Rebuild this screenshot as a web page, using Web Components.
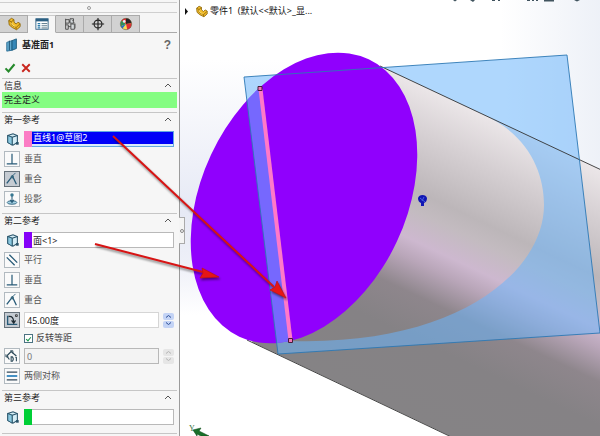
<!DOCTYPE html>
<html lang="zh-CN">
<head>
<meta charset="utf-8">
<title>基准面1</title>
<style>
html,body{margin:0;height:100%}
body{font:9px/12px "Noto Sans","Noto Sans CJK SC",sans-serif;color:#222;background:#fff}
</style>
</head>
<body>
<cad-app></cad-app>
<script>
const ICONS={
part:'<path d="M2 4l3-2.500 3 1.500v3l2.500 2 2-2 2.500 1.500v3.500L11 14.500 6 12 2.500 9z" fill="#f3bd2b" stroke="#8d6508"/><path d="M2 4l3 1.500L8 3M5 5.500v3.500l5.500 3 4-4M10.500 12v2" fill="none" stroke="#8d6508"/><path d="M5.500 6.500v2l4 2.500" fill="none" stroke="#ffe680"/>',
props:'<rect x="1" y="2" width="14" height="12" fill="#fff" stroke="#2b5f82"/><path d="M1 2h14v3H1z" fill="#2b5f82"/><path d="M3 7.500h3M3 10h3M3 12.500h3" stroke="#2b7dac" stroke-width="1.500"/><path d="M7.500 7.500H14M7.500 10H14M7.500 12.500H14" stroke="#45687c"/>',
config:'<path d="M3 2v12M3 3h4v4H3M3 9h3v5H3M7 5h3M6 11h3" fill="none" stroke="#444"/><path d="M8 2h4v5H8zM9 8h4v6H9z" fill="#d5dadd" stroke="#444"/><path d="M10 3l4 5v5" fill="none" stroke="#777"/>',
target:'<circle cx="8" cy="8" r="4.500" fill="none" stroke="#222" stroke-width="1.300"/><path d="M8 1v14M1 8h14" stroke="#222" stroke-width="1.300"/>',
ball:'<circle cx="8" cy="8" r="6.500" fill="#f6dc57"/><path d="M8 8L3 4A6.500 6.500 0 0 0 2 10.500z" fill="#2e8f5a"/><path d="M8 8L3 4a6.500 6.500 0 0 1 5-2.500z" fill="#e02e34"/><path d="M8 8V1.500A6.500 6.500 0 0 1 14.300 7z" fill="#2b2526"/><path d="M8 8l6.300-1a6.500 6.500 0 0 1-4.800 7.300z" fill="#e02e34"/><path d="M8 8L2 10.500l2 2.700z" fill="#2370c8"/><circle cx="6" cy="5" r="1.500" fill="#e4f3fa"/><circle cx="8" cy="8" r="6.500" fill="none" stroke="#534a43" stroke-width=".6"/>',
plane:'<path d="M2 5l6-2v11l-6 1z" fill="#62a9ce" stroke="#286c94"/><path d="M8 3l5-2v11l-5 2z" fill="#3688b8" stroke="#195878"/><path d="M5 3v11" stroke="#174d6c"/>',
ok:'<path d="M2 8.500l4 4L14 3" fill="none" stroke="#25892b" stroke-width="2.800"/>',
no:'<path d="M3 3l10 10M13 3L3 13" stroke="#c9261e" stroke-width="2.500"/>',
cube:'<path d="M2 4l6-2 5 2v8l-5 3-6-3z" fill="#d4edf6" stroke="#285268" stroke-width="1.200"/><path d="M2 4l5 2v9M7 6l6-2" fill="none" stroke="#285268" stroke-width="1.200"/><path d="M2 4l5 2v9l-5-3z" fill="#8bc8df" stroke="#285268"/><path d="M11.500 11.500h3v3h-3z" fill="#285268"/>',
perp:'<path d="M8 2v11M2 13.500h12" fill="none" stroke="#285b78" stroke-width="1.400"/>',
coin:'<path d="M2 13L8.500 4.500 13 14" fill="none" stroke="#285b78" stroke-width="1.500"/><path d="M8 5L12 1" stroke="#285b78"/><circle cx="8.300" cy="5.500" r="1.800" fill="#38687f"/>',
proj:'<ellipse cx="8" cy="12" rx="5.500" ry="2" fill="#a6d3e5" stroke="#285b78"/><path d="M8 4v8M6 9l2 3 2-3" fill="none" stroke="#285b78" stroke-width="1.200"/><circle cx="8" cy="3.500" r="2" fill="#377892"/>',
para:'<path d="M2 5l9 9M5 2l9 9" stroke="#285b78" stroke-width="1.500"/>',
angle:'<path d="M3 3v10h11" fill="none" stroke="#285b78" stroke-width="1.500"/><path d="M4 4q6-1 6 7M7.500 8.500l2.500 3 2-3" fill="none" stroke="#202b32" stroke-width="1.500"/><path d="M12 2h2v2h-2z" fill="none" stroke="#333"/>',
dist:'<path d="M2 8l5-5 6 5M2 8l3 4" fill="none" stroke="#2a4858" stroke-width="1.400"/><path d="M1 6v3h3M6 2h3v3" fill="none" stroke="#2a4858"/><path d="M7 9h1.500q2 2.500 0 5H7zM13 9v5M12 10l1-1" fill="none" stroke="#2a4858" stroke-width="1.200"/>',
sym:'<path d="M2 3.500h12M2 12.500h12" stroke="#34495a" stroke-width="1.500"/><path d="M2 8h12" stroke="#2b81bc" stroke-width="2"/>'
};
function def(name,html){
  const t=document.createElement('template');t.innerHTML=html;
  customElements.define(name,class extends HTMLElement{
    constructor(){super();this.attachShadow({mode:'open'}).append(t.content.cloneNode(true))}
  });
}
customElements.define('cad-icon',class extends HTMLElement{
  connectedCallback(){
    if(this.shadowRoot)return;
    this.attachShadow({mode:'open'}).innerHTML=`<style>:host{display:block;width:14px;height:14px;flex:none}svg{display:block;width:100%;height:100%}</style><svg viewBox="0 0 16 16" aria-hidden="true">${ICONS[this.getAttribute('name')]}</svg>`;
  }
});
def('pm-section',`<style>
:host{display:block;margin:0 2px;border-top:1px solid #c6c6c6;padding-bottom:6px}
:host([info]){padding-bottom:4px}
:host([last]){padding-bottom:8px;border-bottom:1px solid #c6c6c6}
header{height:13px;padding:0 5px 0 2px;display:flex;align-items:center;justify-content:space-between}
h2{margin:0;font:inherit}
button{border:0;background:none;padding:0;width:8px;height:10px;display:grid;place-items:center}
.body{display:grid;gap:4px;padding:5px 3px 0 2px}
:host([info]) .body{padding:0}
</style><header><h2><slot name="title"></slot></h2><button aria-label="折叠"><svg width="8" height="5"><path d="M1 4l3-3 3 3" fill="none" stroke="#555"/></svg></button></header><div class="body"><slot></slot></div>`);
customElements.define('pm-option',class extends HTMLElement{
  connectedCallback(){
    if(this.shadowRoot)return;
    const on=this.hasAttribute('on');
    this.attachShadow({mode:'open'}).innerHTML=`<style>
    :host{display:block}
    button{font:inherit;color:#555;border:0;background:none;padding:0;height:16px;display:flex;align-items:center;gap:4px}
    .box{box-sizing:border-box;width:16px;height:16px;border:1px solid ${on?'#66717a':'#b2bac0'};background:${on?'#c5cbd2':'#fafafa'};display:grid;place-items:center}
    </style><button aria-pressed="${on}"><span class="box"><cad-icon name="${this.getAttribute('icon')}"></cad-icon></span><span><slot></slot></span></button>`;
  }
});
customElements.define('pm-pick',class extends HTMLElement{
  connectedCallback(){
    if(this.shadowRoot)return;
    const a=this.hasAttribute('active');
    this.attachShadow({mode:'open'}).innerHTML=`<style>
    :host{display:flex;align-items:center;gap:4px;height:16px}
    cad-icon{margin-left:2px}
    .f{flex:1;min-width:0;box-sizing:border-box;height:16px;display:flex;border:1px solid ${a?'#62a8e0':'#b9b9b9'};border-left:0;background:${a?'#d9ebfa':'#fff'}}
    .s{width:8px;margin:-1px 0;background:${this.getAttribute('color')}}
    input{flex:1;min-width:0;height:${a?'12px':'14px'};box-sizing:border-box;border:0;padding:0 1px;font:inherit;outline:0;background:${a?'#0000f8':'#fff'};color:${a?'#fff':'#222'}}
    </style><cad-icon name="cube"></cad-icon><div class="f"><span class="s"></span><input readonly aria-label="${this.getAttribute('label')}" value="${this.getAttribute('value')||''}"></div>`;
  }
});
customElements.define('pm-number',class extends HTMLElement{
  connectedCallback(){
    if(this.shadowRoot)return;
    const off=this.hasAttribute('off'),d=off?'disabled':'';
    this.attachShadow({mode:'open'}).innerHTML=`<style>
    :host{display:flex;align-items:center;gap:4px;height:16px}
    .box{box-sizing:border-box;width:16px;height:16px;border:1px solid ${off?'#b2bac0':'#66717a'};background:${off?'#fafafa':'#c5cbd2'};display:grid;place-items:center;flex:none;padding:0}
    input{flex:1;min-width:0;height:16px;box-sizing:border-box;border:1px solid ${off?'#b8b8b8':'#d5d5d5'};padding:0 2px;font:inherit;background:${off?'#f3f3f3':'#fff'};color:${off?'#777':'#222'}}
    .sp{display:grid;width:11px;gap:1px}
    .sp button{border:0;border-radius:2px;padding:0;height:7px;background:${off?'#e6e6e6':'#c3d3f5'};display:grid;place-items:center}
    path{fill:none;stroke:${off?'#b5b5b5':'#2c4f96'}}
    </style><button class="box" aria-label="${this.getAttribute('label')}"><cad-icon name="${this.getAttribute('icon')}"></cad-icon></button><input ${d} aria-label="${this.getAttribute('label')}" value="${this.getAttribute('value')}"><span class="sp"><button ${d} aria-label="增加"><svg width="7" height="4"><path d="M1 3.500l2.500-2 2.500 2"/></svg></button><button ${d} aria-label="减少"><svg width="7" height="4"><path d="M1 .5l2.500 2 2.500-2"/></svg></button></span>`;
  }
});
def('pm-check',`<style>
:host{display:block;height:12px;padding-left:20px}
label{display:flex;align-items:center;gap:3px;height:12px;color:#444}
input{appearance:none;margin:0;width:9px;height:9px;box-sizing:border-box;border:1px solid #4c7382;background:#fff;display:grid;place-items:center}
input:checked::before{content:"";width:2px;height:4px;border:solid #159447;border-width:0 1px 1px 0;transform:rotate(40deg)}
</style><label><input type="checkbox" checked><span><slot></slot></span></label>`);
def('pm-panel',`<style>
:host{display:block;box-sizing:border-box;width:180px;background:#f6f6f6;border-right:1px solid #9b9b9b;padding-top:2px;position:relative}
.grip{height:9px;border:solid #cfcfcf;border-width:1px 0;display:grid;place-items:center;margin-right:2px}
.grip i{width:4px;height:4px;box-sizing:border-box;border:1px solid #999;border-radius:50%}
nav{display:flex;height:18px;margin:2px 2px 0 0}
nav button{flex:0 0 28px;width:28px;border:1px solid #aaa;border-left-width:0;background:#d2d2d2;padding:0;display:grid;place-items:center}
nav button[aria-selected=true]{background:#f6f6f6;border-bottom-color:#f6f6f6;border-top-color:#ccc}
nav::after{content:"";flex:1;border-bottom:1px solid #aaa}
.title{height:24px;display:flex;align-items:center;gap:3px;padding:0 8px 0 5px}
h1{font:inherit;font-weight:bold;margin:0;flex:1}
.title button{border:0;background:none;padding:0;color:#666;font:bold 12px/14px "Liberation Sans",sans-serif}
.act{height:21px;display:flex;align-items:center;gap:4px;padding-left:4px}
.act button{border:0;background:none;padding:0}
.act cad-icon{width:12px;height:12px}
.info{background:#84fd82;height:16px;line-height:16px;padding-left:2px}
.flap{position:absolute;left:100%;top:217px;width:6px;height:27px;box-sizing:border-box;border:1px solid #aaa;border-left:0;background:#f4f4f4;padding:0;display:grid;place-items:center}
.flap i{width:4px;height:4px;box-sizing:border-box;border:1px solid #888;border-radius:50%}
</style>
<div class="grip"><i></i></div>
<nav role="tablist"><button role="tab" aria-label="设计树"><cad-icon name="part"></cad-icon></button><button role="tab" aria-selected="true" aria-label="属性"><cad-icon name="props"></cad-icon></button><button role="tab" aria-label="配置"><cad-icon name="config"></cad-icon></button><button role="tab" aria-label="尺寸"><cad-icon name="target"></cad-icon></button><button role="tab" aria-label="外观"><cad-icon name="ball"></cad-icon></button></nav>
<div class="title"><cad-icon name="plane"></cad-icon><h1>基准面1</h1><button>?</button></div>
<div class="act"><button aria-label="确定"><cad-icon name="ok"></cad-icon></button><button aria-label="取消"><cad-icon name="no"></cad-icon></button></div>
<pm-section info><span slot="title">信息</span><div class="info">完全定义</div></pm-section>
<pm-section><span slot="title">第一参考</span>
<pm-pick active color="#fb7cc4" label="第一参考" value="直线1@草图2"></pm-pick>
<pm-option icon="perp">垂直</pm-option><pm-option icon="coin" on>重合</pm-option><pm-option icon="proj">投影</pm-option></pm-section>
<pm-section><span slot="title">第二参考</span>
<pm-pick color="#8500f8" label="第二参考" value="面&lt;1&gt;"></pm-pick>
<pm-option icon="para">平行</pm-option><pm-option icon="perp">垂直</pm-option><pm-option icon="coin">重合</pm-option>
<pm-number icon="angle" label="角度" value="45.00度"></pm-number>
<pm-check>反转等距</pm-check>
<pm-number off icon="dist" label="距离" value="0"></pm-number>
<pm-option icon="sym">两侧对称</pm-option></pm-section>
<pm-section last><span slot="title">第三参考</span><pm-pick color="#00cf36" label="第三参考"></pm-pick></pm-section>
<button class="flap" aria-label="收起面板"><i></i></button>`);
def('cad-view',`<style>
:host{display:block;position:relative;overflow:hidden;background:#fff}
svg.scene{position:absolute;inset:0;width:100%;height:100%}
.tree{position:relative;display:flex;align-items:center;gap:2px;height:16px;padding:3px 0 0 3px;color:#111}
.tree button{border:0;background:none;padding:0;width:6px;height:10px;display:grid;place-items:center;margin-right:4px}
.tree cad-icon{width:13px;height:13px}
pre{margin:0;font:inherit}
</style>
<svg class="scene" aria-hidden="true">
<defs>
<linearGradient id="bg" gradientUnits="userSpaceOnUse" x1="180" y1="60" x2="180" y2="315"><stop offset="0" stop-color="#fff"/><stop offset=".6" stop-color="#e6e9f5"/><stop offset=".8" stop-color="#eef0f8"/><stop offset="1" stop-color="#fff"/></linearGradient>
<linearGradient id="bgr" gradientUnits="userSpaceOnUse" x1="500" y1="0" x2="620" y2="0"><stop offset="0" stop-color="#fff"/><stop offset="1" stop-color="#eaeef6"/></linearGradient>
<linearGradient id="body" gradientUnits="userSpaceOnUse" x1="430" y1="90" x2="300" y2="365"><stop offset="0" stop-color="#ebe6e8"/><stop offset=".14" stop-color="#d6d0d3"/><stop offset=".32" stop-color="#bcb6b9"/><stop offset=".38" stop-color="#c3bbc0"/><stop offset=".47" stop-color="#cdb8cf"/><stop offset=".53" stop-color="#b9a6b9"/><stop offset=".63" stop-color="#8e868c"/><stop offset=".76" stop-color="#858285"/><stop offset="1" stop-color="#858385"/></linearGradient>
<clipPath id="disc"><ellipse cx="304" cy="198" rx="153" ry="102.600" transform="rotate(-65 304 198)"/></clipPath>
</defs>
<g transform="translate(-180 0)">
<rect x="180" width="160" height="436" fill="url(#bg)"/>
<rect x="340" width="2000" height="436" fill="url(#bgr)"/>
<path d="M380 66L1800 733V1077L252 342Z" fill="url(#body)"/>
<path d="M244 77L567 55 600 333 278 354Z" fill="#6cb6fb" fill-opacity=".54"/>
<path d="M380 66L482 114C528 134 544 172 544 205C544 272 456 346 291 341L270 200Z" fill="url(#body)"/>
<path d="M380 66L1800 733M247 340L1800 1077" stroke="#333" fill="none" stroke-width=".9"/>
<ellipse cx="304" cy="198" rx="153" ry="102.600" transform="rotate(-65 304 198)" fill="#9000fd"/>
<path d="M244 77L262 76 260 88 290 341 290 353 278 354Z" fill="#65a8ff" fill-opacity=".62" clip-path="url(#disc)"/>
<path d="M244 77L567 55 600 333 278 354Z" fill="none" stroke="#2d78b4" stroke-width=".9"/>
<path d="M260.500 89L290.500 340" stroke="#ff79c8" stroke-width="4"/>
<path d="M258 86.500h4v4h-4zM288.500 338.500h4v4h-4z" fill="#f276b7" stroke="#471c38"/>
<path d="M418 198q1-3 4.500-3t4.500 3q0 4-3 5v3h-3v-3q-3-1-3-5z" fill="#1016b4"/><path d="M420 198l5 4M424 197l-2 4" stroke="#4860de"/>
<g fill="#41545f"><path d="M453 0h4l-2 1.500zM470 0h5l-2 2zM492 0h3v1h-3zM498 0h2v1h-2zM527 0h3v1h-3zM532 0h2v1h-2zM536 0h2v1h-2zM544 0h10v1.500h-10zM574 0h6l-3 1.500z"/></g>
<path d="M193 430l8-2-2 3 10 5h-8l-4-2v2z" fill="#19702a" stroke="#0e4e1a" stroke-width=".6"/>
<text x="189" y="431" font-family="Liberation Serif, serif" font-size="8" fill="#37703a">Y</text>
</g></svg>
<div class="tree"><button aria-label="展开"><svg width="5" height="7"><path d="M1 0l3 3.500-3 3.500z" fill="#111"/></svg></button><cad-icon name="part"></cad-icon><pre>零件1  (默认&lt;&lt;默认&gt;_显...</pre></div>`);
def('cad-arrows',`<style>:host{position:absolute;inset:0;pointer-events:none;z-index:2}svg{width:100%;height:100%;display:block;filter:drop-shadow(1px 2px 1px #0007)}</style>
<svg aria-hidden="true"><path d="M113 136L274 287M95 244L203 272" stroke="#d81414" stroke-width="2" fill="none"/><path d="M286 298l-16-8 5-3 2-6zM219 277l-19 1 3-5-1-5z" fill="#e61616" stroke="#c01212" stroke-width=".7"/></svg>`);
def('cad-app',`<style>
:host{display:flex;position:relative;min-height:100vh;overflow:hidden}
pm-panel{flex:none;z-index:1}
cad-view{flex:1;min-width:0}
</style><pm-panel></pm-panel><cad-view></cad-view><cad-arrows></cad-arrows>`);
</script>
</body>
</html>
